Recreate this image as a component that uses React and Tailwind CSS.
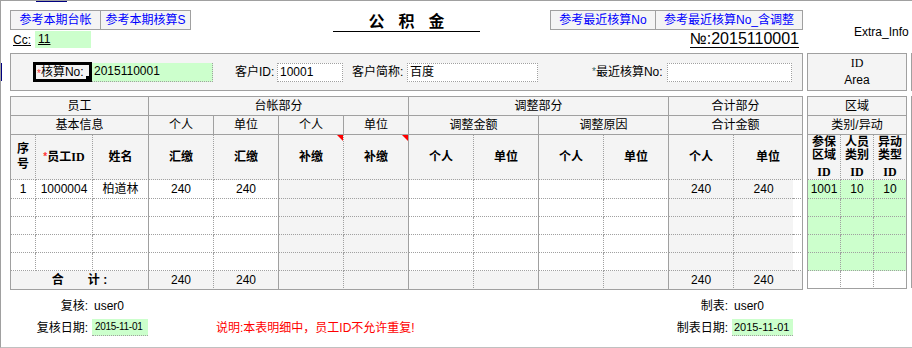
import React from 'react';

const font = "font-['Liberation_Sans','Noto_Sans_CJK_SC',sans-serif]";
const serif = "font-['Liberation_Serif','Noto_Serif_CJK_SC',serif]";

// right border per column: dotted / solid / none
const RB = {
  d: 'border-r border-r-[#a0a0a0] [border-right-style:dotted]',
  s: 'border-r border-r-[#a0a0a0]',
  n: '',
};
const BB = {
  d: 'border-b border-b-[#a0a0a0] [border-bottom-style:dotted]',
  s: 'border-b border-b-[#a0a0a0]',
};
const BG = {
  w: 'bg-white',
  g: 'bg-[#f4f4f4]',
  gr: 'bg-[#ccffcc]',
};

const cell = 'p-0 text-center align-middle font-normal whitespace-nowrap';
const head = `${cell} bg-[#f4f4f4] ${RB.s} ${BB.s}`;

const mainCols = [25, 57, 56, 65, 65, 65, 65, 65, 65, 65, 65, 65, 59, 10];
const mainSep = ['d', 'd', 's', 'd', 's', 'd', 's', 'd', 's', 'd', 's', 'd', 'n', 's'];
const mainBg = ['w', 'w', 'w', 'w', 'w', 'g', 'g', 'w', 'w', 'w', 'w', 'g', 'g', 'w'];

const rows = [
  ['1', '1000004', '柏道林', '240', '240', '', '', '', '', '', '', '240', '240', ''],
  ['', '', '', '', '', '', '', '', '', '', '', '', '', ''],
  ['', '', '', '', '', '', '', '', '', '', '', '', '', ''],
  ['', '', '', '', '', '', '', '', '', '', '', '', '', ''],
  ['', '', '', '', '', '', '', '', '', '', '', '', '', ''],
];

const sideRows = [
  ['1001', '10', '10'],
  ['', '', ''],
  ['', '', ''],
  ['', '', ''],
  ['', '', ''],
];
const sideSep = ['d', 'd', 's'];

const Star = ({ color = 'text-[#ff3333]' }) => (
  <span className={`${color} text-[10px] align-top relative top-[1px]`}>*</span>
);

const Corner = () => (
  <span className="absolute top-0 right-0 w-0 h-0 border-t-[6px] border-t-[#ff0000] border-l-[6px] border-l-transparent" />
);

const MainTable = () => (
  <table className="table-fixed border-separate border-spacing-0 w-[793px] border-l border-t border-[#a0a0a0] text-[12px]">
    <colgroup>
      {mainCols.map((w, i) => (
        <col key={i} style={{ width: w }} />
      ))}
    </colgroup>
    <thead>
      <tr className="h-[19px]">
        <th colSpan={3} className={head}>员工</th>
        <th colSpan={4} className={head}>台帐部分</th>
        <th colSpan={4} className={head}>调整部分</th>
        <th colSpan={3} className={head}>合计部分</th>
      </tr>
      <tr className="h-[19px]">
        <th colSpan={3} className={head}>基本信息</th>
        <th className={head}>个人</th>
        <th className={head}>单位</th>
        <th className={head}>个人</th>
        <th className={head}>单位</th>
        <th colSpan={2} className={head}>调整金额</th>
        <th colSpan={2} className={head}>调整原因</th>
        <th colSpan={3} className={head}>合计金额</th>
      </tr>
      <tr className="h-[45px]">
        {[
          ['序号', 'd'],
          ['员工ID', 'd'],
          ['姓名', 's'],
          ['汇缴', 'd'],
          ['汇缴', 's'],
          ['补缴', 'd'],
          ['补缴', 's'],
          ['个人', 'd'],
          ['单位', 's'],
          ['个人', 'd'],
          ['单位', 's'],
          ['个人', 'd'],
          ['单位', 's'],
        ].map(([t, sep], i) => (
          <th
            key={i}
            colSpan={i === 12 ? 2 : 1}
            className={`${cell} relative !font-bold bg-[#f4f4f4] ${RB[sep]} ${BB.d}`}
          >
            {i === 0 ? (
              <span className="block leading-[15px] whitespace-normal">
                序<br />号
              </span>
            ) : i === 1 ? (
              <span>
                <Star />
                员工<span className={serif}>ID</span>
              </span>
            ) : (
              t
            )}
            {(i === 5 || i === 6) && <Corner />}
          </th>
        ))}
      </tr>
    </thead>
    <tbody>
      {rows.map((r, ri) => (
        <tr key={ri} className="h-[18px]">
          {r.map((v, ci) => (
            <td key={ci} className={`${cell} ${BG[mainBg[ci]]} ${RB[mainSep[ci]]} ${BB.d}`}>
              {v}
            </td>
          ))}
        </tr>
      ))}
      <tr className="h-[18px]">
        <td colSpan={3} className={`${cell} bg-[#f4f4f4] ${RB.s} ${BB.s} !font-bold`}>
          <span className="inline-flex gap-[24px]">
            <span>合</span>
            <span>计 :</span>
          </span>
        </td>
        {['240', '240', '', '', '', '', '', '', '240', '240', ''].map((v, i) => (
          <td key={i} className={`${cell} bg-[#f4f4f4] ${RB[mainSep[i + 3]]} ${BB.s}`}>
            {v}
          </td>
        ))}
      </tr>
    </tbody>
  </table>
);

const SideTable = () => (
  <table className="table-fixed border-separate border-spacing-0 w-[100px] border-l border-t border-[#a0a0a0] text-[12px]">
    <colgroup>
      <col style={{ width: 33 }} />
      <col style={{ width: 33 }} />
      <col style={{ width: 33 }} />
    </colgroup>
    <thead>
      <tr className="h-[19px]">
        <th colSpan={3} className={head}>区域</th>
      </tr>
      <tr className="h-[19px]">
        <th colSpan={3} className={head}>类别/异动</th>
      </tr>
      <tr className="h-[45px]">
        {[
          ['参保', '区域'],
          ['人员', '类别'],
          ['异动', '类型'],
        ].map(([a, b], i) => (
          <th key={i} className={`p-0 text-center align-top font-bold bg-[#f4f4f4] ${RB[sideSep[i]]} ${BB.d}`}>
            <div className="leading-[13px] pt-[1px]">{a}</div>
            <div className="leading-[13px]">{b}</div>
            <div className={`leading-[13px] mt-[4px] ${serif}`}>ID</div>
          </th>
        ))}
      </tr>
    </thead>
    <tbody>
      {sideRows.map((r, ri) => (
        <tr key={ri} className="h-[18px]">
          {r.map((v, ci) => (
            <td key={ci} className={`${cell} ${BG.gr} ${RB[sideSep[ci]]} ${BB.d}`}>
              {v}
            </td>
          ))}
        </tr>
      ))}
      <tr className="h-[18px]">
        {sideSep.map((s, ci) => (
          <td key={ci} className={`${cell} bg-white ${RB[s]} ${BB.s}`} />
        ))}
      </tr>
    </tbody>
  </table>
);

const Btn = ({ children, className = '' }) => (
  <button
    type="button"
    className={`h-[20px] border border-[#a0a0a0] bg-[#f4f4f4] text-[#0000ff] text-[12px] leading-[18px] whitespace-nowrap ${className}`}
  >
    {children}
  </button>
);

const Field = ({ className = '', children }) => (
  <div
    className={`h-[19px] bg-white border border-dotted border-[#a0a0a0] pl-[2px] leading-[17px] whitespace-nowrap overflow-hidden ${className}`}
  >
    {children}
  </div>
);

const App = () => {
  return (
    <div
      className={`relative w-[912px] h-[348px] overflow-hidden bg-white border-t border-l border-b border-t-[#a0a0a0] border-l-[#a0a0a0] border-b-[#c0c0c0] text-[12px] text-black ${font}`}
    >
      <div className="absolute top-[-1px] left-[35px] w-[31px] h-[2px] bg-[#000080]" />
      <div className="absolute top-[62px] left-[-1px] w-[2px] h-[18px] bg-[#000080]" />

      <div className="flex pl-[9px]">
        {/* main column */}
        <div className="w-[793px] shrink-0">
          <div className="h-[52px] grid grid-cols-[1fr_auto_1fr]">
            <div className="pt-[9px]">
              <div className="flex">
                <Btn className="w-[91px]">参考本期台帐</Btn>
                <Btn className="w-[90px] border-l-0">参考本期核算S</Btn>
              </div>
              <div className="mt-[1px] flex items-center h-[17px]">
                <span className="ml-[3px] underline">Cc:</span>
                <span className="ml-[4px] w-[56px] h-[17px] bg-[#ccffcc] pl-[3px] leading-[17px]">
                  <span className="underline">11</span>
                </span>
              </div>
            </div>
            <div className="mt-[12px] w-[147px] h-[19px] border-b border-black flex justify-center gap-[14px] text-[16px] font-bold leading-[18px]">
              <span>公</span>
              <span>积</span>
              <span>金</span>
            </div>
            <div className="pt-[9px] flex flex-col items-end">
              <div className="flex">
                <Btn className="w-[106px]">参考最近核算No</Btn>
                <Btn className="w-[147px] border-l-0">参考最近核算No_含调整</Btn>
              </div>
              <div className="mr-[4px] h-[18px] border-b border-black text-[16px] leading-[17px]">
                №:2015110001
              </div>
            </div>
          </div>

          <div className="h-[38px] border border-[#a0a0a0] bg-[#f4f4f4] flex items-center">
            <div className="relative ml-[22px] w-[59px] h-[20px] border-[3px] border-black flex items-center pl-[1px] whitespace-nowrap">
              <Star />
              核算No:
              <span className="absolute right-[-2px] bottom-[-2px] w-[5px] h-[5px] bg-black" />
            </div>
            <Field className="w-[121px] !bg-[#ccffcc] border-t-0 border-l-0">2015110001</Field>
            <span className="ml-[22px] w-[42px] whitespace-nowrap">客户ID:</span>
            <Field className="w-[66px]">10001</Field>
            <span className="ml-[9px] w-[55px] whitespace-nowrap">客户简称:</span>
            <Field className="w-[131px]">百度</Field>
            <span className="ml-[54px] w-[75px] whitespace-nowrap">
              <Star color="text-[#336666]" />
              最近核算No:
            </span>
            <Field className="w-[125px]" />
          </div>

          <div className="mt-[5px]">
            <MainTable />
          </div>

          <div className="mt-[7px] flex justify-between pr-[10px]">
            <div>
              <div className="flex h-[18px] items-center">
                <span className="w-[78px] text-right">复核:</span>
                <span className="ml-[6px]">user0</span>
              </div>
              <div className="mt-[4px] flex h-[17px] items-center">
                <span className="w-[78px] text-right">复核日期:</span>
                <span className="ml-[4px] w-[56px] h-[17px] bg-[#ccffcc] border-b border-dotted border-[#a0a0a0] pl-[3px] text-[10px] leading-[16px] tracking-[-0.3px] whitespace-nowrap">
                  2015-11-01
                </span>
                <span className="ml-[68px] text-[#ff0000] whitespace-nowrap">说明:本表明细中，员工ID不允许重复!</span>
              </div>
            </div>
            <div>
              <div className="flex h-[18px] items-center">
                <span className="w-[70px] text-right">制表:</span>
                <span className="ml-[4px] w-[61px] pl-[2px]">user0</span>
              </div>
              <div className="mt-[4px] flex h-[17px] items-center">
                <span className="w-[70px] text-right">制表日期:</span>
                <span className="ml-[4px] w-[61px] h-[17px] bg-[#ccffcc] border-b border-dotted border-[#a0a0a0] pl-[2px] text-[11px] leading-[16px] whitespace-nowrap">
                  2015-11-01
                </span>
              </div>
            </div>
          </div>
        </div>

        {/* side column */}
        <div className="ml-[4px] w-[100px] shrink-0">
          <div className="h-[52px] pl-[47px] pt-[22px] whitespace-nowrap">Extra_Info</div>
          <div className="h-[38px] border border-[#a0a0a0] bg-[#f4f4f4] flex flex-col items-center justify-center leading-[17px]">
            <span className={serif}>ID</span>
            <span>Area</span>
          </div>
          <div className="mt-[5px]">
            <SideTable />
          </div>
        </div>

        {/* next column, cut off by the window */}
        <div className="ml-[4px] w-[100px] shrink-0">
          <div className="h-[52px]" />
          <div className="h-[38px] border border-[#a0a0a0] bg-[#f4f4f4]" />
          <div className="mt-[5px] h-[192px] border border-[#a0a0a0]" />
        </div>
      </div>
    </div>
  );
};

export default App;
